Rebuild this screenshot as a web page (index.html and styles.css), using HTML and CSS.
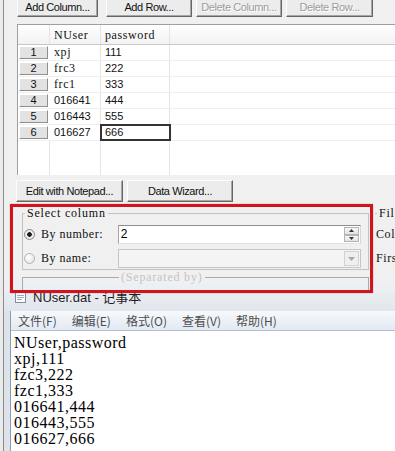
FILE: index.html
```html
<!DOCTYPE html>
<html lang="en">
<head>
    <meta charset="UTF-8">
    <title>NUser.dat</title>
    <link rel="stylesheet" href="styles.css">
</head>
<body>
<div class="screen">
    <!-- Data dialog behind -->
    <div class="dlg">
        <div class="toolbar">
            <button class="btn b-first">Add Column...</button>
            <button class="btn b-mid">Add Row...</button>
            <button class="btn b-mid off">Delete Column...</button>
            <button class="btn b-last off">Delete Row...</button>
        </div>

        <div class="sheet">
            <div class="sheet-row sheet-head">
                <div class="cell"></div>
                <div class="cell word">NUser</div>
                <div class="cell word">password</div>
                <div class="cell"></div>
            </div>
            <div class="sheet-row">
                <div class="cell row-no"><span class="row-box">1</span></div>
                <div class="cell word">xpj</div>
                <div class="cell">111</div>
                <div class="cell"></div>
            </div>
            <div class="sheet-row">
                <div class="cell row-no"><span class="row-box">2</span></div>
                <div class="cell word">frc3</div>
                <div class="cell">222</div>
                <div class="cell"></div>
            </div>
            <div class="sheet-row">
                <div class="cell row-no"><span class="row-box">3</span></div>
                <div class="cell word">frc1</div>
                <div class="cell">333</div>
                <div class="cell"></div>
            </div>
            <div class="sheet-row">
                <div class="cell row-no"><span class="row-box">4</span></div>
                <div class="cell">016641</div>
                <div class="cell">444</div>
                <div class="cell"></div>
            </div>
            <div class="sheet-row">
                <div class="cell row-no"><span class="row-box">5</span></div>
                <div class="cell">016443</div>
                <div class="cell">555</div>
                <div class="cell"></div>
            </div>
            <div class="sheet-row">
                <div class="cell row-no"><span class="row-box">6</span></div>
                <div class="cell">016627</div>
                <div class="cell pick">666</div>
                <div class="cell"></div>
            </div>
            <div class="sheet-row sheet-fill">
                <div class="cell"></div>
                <div class="cell"></div>
                <div class="cell"></div>
                <div class="cell"></div>
            </div>
        </div>

        <div class="actions">
            <button class="btn b-notepad">Edit with Notepad...</button>
            <button class="btn b-wizard">Data Wizard...</button>
        </div>

        <div class="options">
            <!-- red callout round the column selector -->
            <div class="callout">
                <fieldset class="group select-group">
                    <legend>Select column</legend>
                    <div class="opt-row">
                        <label class="radio"><span class="dot on"></span>By number:</label>
                        <div class="spin">
                            <span class="spin-val">2</span>
                            <span class="spin-btns">
                                <span><svg width="5" height="3" viewBox="0 0 5 3"><path d="M0 3h5L2.5 0z" fill="#333"/></svg></span>
                                <span><svg width="5" height="3" viewBox="0 0 5 3"><path d="M0 0h5L2.5 3z" fill="#333"/></svg></span>
                            </span>
                        </div>
                    </div>
                    <div class="opt-row">
                        <label class="radio"><span class="dot"></span>By name:</label>
                        <div class="combo">
                            <span class="combo-val"></span>
                            <span class="combo-btn"><svg width="7" height="4" viewBox="0 0 7 4"><path d="M0 0h7L3.5 4z" fill="#a9a9a9"/></svg></span>
                        </div>
                    </div>
                </fieldset>
                <fieldset class="group next-group">
                    <legend>(Separated by)</legend>
                </fieldset>
            </div>

            <fieldset class="group file-group">
                <legend>File format</legend>
                <div class="file-line">Column separator</div>
                <div class="file-line">First line</div>
            </fieldset>
        </div>
    </div>

    <!-- Notepad window in front -->
    <div class="notepad">
        <div class="np-title">
            <svg width="13" height="14" viewBox="0 0 13 14">
                <rect x="1.5" y="1.5" width="10" height="12" fill="#fff" stroke="#7d8fa6"/>
                <rect x="2" y="2" width="9" height="2" fill="#5b9bd5"/>
                <path d="M3 6.5h7M3 8.5h7M3 10.5h5" stroke="#9aaabb"/>
            </svg>
            <span>NUser.dat - 记事本</span>
        </div>
        <div class="np-body">
            <div class="np-client">
                <div class="np-menu">
                    <span>文件(F)</span>
                    <span>编辑(E)</span>
                    <span>格式(O)</span>
                    <span>查看(V)</span>
                    <span>帮助(H)</span>
                </div>
                <div class="np-edit">NUser,password
xpj,111
fzc3,222
fzc1,333
016641,444
016443,555
016627,666</div>
            </div>
        </div>
    </div>
</div>
</body>
</html>
```

FILE: styles.css
```css
body {
    margin: 0;
    background-color: #ebebeb;
    font-family: "Liberation Sans", Arial, sans-serif;
}

.screen {
    width: 392px;
    height: 451px;
    box-sizing: border-box;
    margin-left: 3px;
    border-left: 1px solid #8b8b8b;
    background-color: #f0f0f0;
    overflow: hidden;
}

/* buttons */
.toolbar {
    display: flex;
    gap: 4px;
    margin-top: -6px;
    padding-left: 13px;
}

.btn {
    height: 23px;
    box-sizing: border-box;
    padding: 2px 0 0;
    font: 11px "Liberation Sans", Arial, sans-serif;
    letter-spacing: -0.4px;
    color: #111;
    background-color: #ececec;
    border: 1px solid;
    border-color: #fdfdfd #666 #666 #fdfdfd;
    box-shadow: inset -1px -1px 0 #a6a6a6;
}

.btn.off {
    color: #9c9c9c;
    text-shadow: 1px 1px 0 #fff;
}

.b-first { width: 81px; margin-right: 4px; }
.b-mid { width: 86px; }
.b-last { width: 87px; }

/* sheet */
.sheet {
    margin: 7px 0 0 13px;
    height: 151px;
    box-sizing: border-box;
    border-top: 1px solid #a0a0a0;
    border-left: 1px solid #a0a0a0;
    background-color: #fff;
    display: flex;
    flex-direction: column;
}

.sheet-row {
    display: grid;
    grid-template-columns: 32px 51px 69px 1fr;
    height: 16px;
    box-sizing: border-box;
    border-bottom: 1px solid #efefef;
}

.sheet-head {
    height: 20px;
    border-bottom-color: #c9c9c9;
    background: linear-gradient(#ffffff, #f2f2f2);
}

.sheet-fill {
    flex: 1;
    height: auto;
    border-bottom: 0;
}

.cell {
    border-right: 1px solid #e4e4e4;
    padding-left: 4px;
    font: 11px/15px "Liberation Sans", Arial, sans-serif;
    color: #111;
    white-space: nowrap;
    overflow: hidden;
}

.cell:last-child {
    border-right: 0;
}

.sheet-head .cell {
    line-height: 20px;
}

.word {
    font-family: "Liberation Serif", serif;
    font-size: 12px;
    letter-spacing: 0.6px;
}

.row-no {
    padding: 0;
    display: flex;
    border-right-color: #fff;
}

.row-box {
    flex: 1;
    margin: 1px;
    box-sizing: border-box;
    background-color: #e2e2e2;
    border: 1px solid;
    border-color: #fff #8e8e8e #8e8e8e #fff;
    text-align: center;
    line-height: 11px;
}

.cell.pick {
    outline: 2px solid #333;
    outline-offset: -1px;
}

.actions {
    display: flex;
    gap: 4px;
    margin: 5px 0 0 12px;
}

.actions .btn {
    height: 22px;
    padding-top: 0;
}

.b-notepad { width: 107px; }
.b-wizard { width: 106px; }

/* column options */
.options {
    display: flex;
    align-items: flex-start;
    margin: 2px 0 0 6px;
    height: 89px;
}

.callout {
    position: relative;
    z-index: 2;
    flex: none;
    width: 363px;
    height: 89px;
    box-sizing: border-box;
    border: 3px solid #cf141d;
    box-shadow: 0 0 1px rgba(207, 20, 29, 0.6);
    overflow: hidden;
}

.group {
    margin: 0;
    padding: 0;
    min-width: 0;
    border: 1px solid #c2c2c2;
}

.group legend {
    padding: 0 2px;
    margin-left: 1px;
    font: 12px/12px "Liberation Serif", serif;
    letter-spacing: 0.8px;
    color: #111;
}

.select-group {
    margin: 0 1px 0 9px;
    padding: 6px 7px 1px 1px;
}

.opt-row {
    display: flex;
    align-items: center;
    height: 19px;
}

.opt-row + .opt-row {
    margin-top: 5px;
}

.radio {
    width: 94px;
    display: flex;
    align-items: center;
    font: 12px "Liberation Serif", serif;
    letter-spacing: 0.5px;
    color: #111;
}

.dot {
    width: 11px;
    height: 11px;
    box-sizing: border-box;
    margin-right: 6px;
    border-radius: 50%;
    border: 1px solid #b4b4b4;
    background: radial-gradient(circle at 40% 35%, #fff, #dedede);
}

.dot.on {
    border-color: #8a8a8a;
    background: radial-gradient(circle, #1b1b1b 0 2px, #f2f2f2 2.6px, #d8d8d8);
}

.spin, .combo {
    width: 244px;
    height: 19px;
    box-sizing: border-box;
    display: flex;
    border: 1px solid;
}

.spin {
    border-color: #8e8f8f #d6d6d6 #e3e3e3 #a4a4a4;
    background-color: #fff;
}

.spin-val {
    flex: 1;
    padding-left: 2px;
    font: 12px/17px "Liberation Sans", Arial, sans-serif;
    color: #000;
}

.spin-btns {
    width: 15px;
    display: flex;
    flex-direction: column;
    margin: 1px;
}

.spin-btns span {
    flex: 1;
    display: flex;
    align-items: center;
    justify-content: center;
    box-sizing: border-box;
    background: linear-gradient(#f7f7f7, #e2e2e2);
    border: 1px solid #b5b5b5;
}

.spin-btns svg {
    display: block;
}

.combo {
    border-color: #c6c6c6;
    background-color: #f4f4f4;
}

.combo-val {
    flex: 1;
}

.combo-btn {
    width: 15px;
    margin: 1px;
    display: flex;
    align-items: center;
    justify-content: center;
    box-sizing: border-box;
    background-color: #efefef;
    border: 1px solid #d2d2d2;
}

.next-group {
    margin: 1px 1px 0 9px;
    height: 40px;
    border-color: #a9a9a9;
}

.next-group legend {
    margin-left: 96px;
    color: #c4c4c4;
}

.file-group {
    flex: none;
    width: 120px;
    margin: 3px 0 0 2px;
    padding: 6px 0 0 1px;
    border: 0;
    border-top: 1px solid #c2c2c2;
}

.file-line {
    height: 19px;
    font: 12px/19px "Liberation Serif", serif;
    letter-spacing: 0.6px;
    color: #111;
    white-space: nowrap;
}

.file-line + .file-line {
    margin-top: 5px;
}

/* notepad window */
.notepad {
    margin-top: -10px;
}

.np-title {
    height: 26px;
    display: flex;
    align-items: center;
    gap: 6px;
    padding: 0 0 2px 10px;
    background: linear-gradient(#eef1f4, #e1e6ec);
    font: 13px "Liberation Sans", "Noto Sans CJK SC", sans-serif;
    color: #1e1e1e;
}

.np-body {
    padding-left: 6px;
    background-color: #dde3ea;
}

.np-client {
    border-left: 1px solid #8d9bab;
}

.np-menu {
    height: 19px;
    display: flex;
    gap: 15px;
    padding-left: 7px;
    border-bottom: 1px solid #b7c0cc;
    background: linear-gradient(#f7f9fc, #e2e9f3);
    font: 12px/19px "Noto Sans CJK SC", sans-serif;
    color: #4d4d4d;
}

.np-edit {
    height: 140px;
    padding: 4px 0 0 3px;
    background-color: #fff;
    font: 16px/16px "Liberation Serif", serif;
    letter-spacing: 0.5px;
    color: #000;
    white-space: pre;
}
```
